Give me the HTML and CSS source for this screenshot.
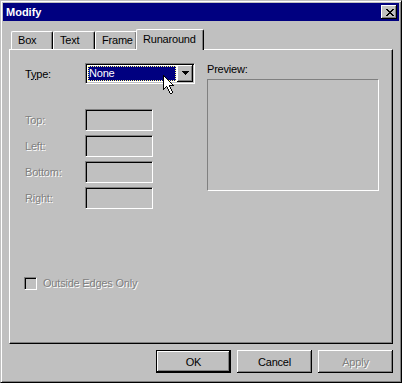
FILE: index.html
```html
<!DOCTYPE html>
<html>
<head>
<meta charset="utf-8">
<title>Modify</title>
<link rel="stylesheet" href="styles.css">
</head>
<body>
<div class="window">
  <div class="titlebar">
    <span class="title">Modify</span>
    <button class="close" aria-label="Close">
      <svg width="8" height="7" viewBox="0 0 8 7" shape-rendering="crispEdges"><path fill="#000" d="M0 0h2v1H0z M6 0h2v1H6z M1 1h2v1H1z M5 1h2v1H5z M2 2h4v1H2z M3 3h2v1H3z M2 4h4v1H2z M1 5h2v1H1z M5 5h2v1H5z M0 6h2v1H0z M6 6h2v1H6z"/></svg>
    </button>
  </div>
  <div class="dialog">
    <div class="tabs">
      <div class="tab">Box</div>
      <div class="tab">Text</div>
      <div class="tab">Frame</div>
      <div class="tab active">Runaround</div>
    </div>
    <div class="panel">
      <div class="cols">
        <div class="col-left">
          <div class="type-row">
            <span class="lbl">T<u>y</u>pe:</span>
            <div class="combo">
              <div class="combo-value"><span class="sel">None</span></div>
              <div class="combo-btn">
                <svg width="7" height="4" viewBox="0 0 7 4" shape-rendering="crispEdges"><path fill="#000" d="M0 0h7v1H0z M1 1h5v1H1z M2 2h3v1H2z M3 3h1v1H3z"/></svg>
              </div>
            </div>
          </div>
          <div class="fields">
            <div class="field-row"><span class="lbl disabled">Top:</span><div class="field"></div></div>
            <div class="field-row"><span class="lbl disabled">Left:</span><div class="field"></div></div>
            <div class="field-row"><span class="lbl disabled">Bottom:</span><div class="field"></div></div>
            <div class="field-row"><span class="lbl disabled">Right:</span><div class="field"></div></div>
          </div>
        </div>
        <div class="col-right">
          <div class="preview-label">Preview:</div>
          <div class="preview-box"></div>
        </div>
      </div>
      <div class="check-row">
        <span class="checkbox"></span>
        <span class="check-label disabled">Outside Edges Only</span>
      </div>
    </div>
    <div class="buttons">
      <button class="btn default">OK</button>
      <button class="btn">Cancel</button>
      <button class="btn" disabled>Apply</button>
    </div>
  </div>
  <svg class="cursor" width="12" height="19" viewBox="0 0 12 19" shape-rendering="crispEdges">
    <path fill="#fff" d="M1 2h1v1H1z M1 3h2v1H1z M1 4h3v1H1z M1 5h4v1H1z M1 6h5v1H1z M1 7h6v1H1z M1 8h7v1H1z M1 9h8v1H1z M1 10h5v1H1z M1 11h2v1H1z M4 11h2v1H4z M1 12h1v1H1z M5 12h2v1H5z M5 13h2v1H5z M6 14h2v1H6z M6 15h2v1H6z M7 16h2v1H7z M7 17h2v1H7z"/>
    <path fill="#000" d="M0 0h1v1H0z M0 1h2v1H0z M0 2h1v1H0z M2 2h1v1H2z M0 3h1v1H0z M3 3h1v1H3z M0 4h1v1H0z M4 4h1v1H4z M0 5h1v1H0z M5 5h1v1H5z M0 6h1v1H0z M6 6h1v1H6z M0 7h1v1H0z M7 7h1v1H7z M0 8h1v1H0z M8 8h1v1H8z M0 9h1v1H0z M9 9h1v1H9z M0 10h1v1H0z M6 10h5v1H6z M0 11h1v1H0z M3 11h1v1H3z M6 11h1v1H6z M0 12h1v1H0z M2 12h1v1H2z M4 12h1v1H4z M7 12h1v1H7z M0 13h2v1H0z M4 13h1v1H4z M7 13h1v1H7z M0 14h1v1H0z M5 14h1v1H5z M8 14h1v1H8z M5 15h1v1H5z M8 15h1v1H8z M6 16h1v1H6z M9 16h1v1H9z M6 17h1v1H6z M9 17h1v1H9z M7 18h2v1H7z"/>
  </svg>
</div>
</body>
</html>
```

FILE: styles.css
```css
html, body {
  margin: 0;
  padding: 0;
}

body {
  font-family: "Liberation Sans", Arial, sans-serif;
  font-size: 11px;
  letter-spacing: -0.2px;
  color: #000;
  background: #c0c0c0;
}

.window {
  position: relative;
  width: 402px;
  height: 383px;
  box-sizing: border-box;
  border: 1px solid;
  border-color: #c0c0c0 #000 #000 #c0c0c0;
  box-shadow: inset 1px 1px #fff, inset -1px -1px #808080;
  padding: 2px;
  background: #c0c0c0;
  display: flex;
  flex-direction: column;
}

/* title bar */
.titlebar {
  height: 18px;
  flex: none;
  background: #000080;
  color: #fff;
  display: flex;
  align-items: center;
  justify-content: space-between;
  padding: 0 2px 0 3px;
}

.title {
  font-weight: bold;
  line-height: 18px;
  letter-spacing: 0;
}

.close {
  width: 16px;
  height: 14px;
  box-sizing: border-box;
  padding: 0 0 0 1px;
  border: 0;
  background: #c0c0c0;
  box-shadow: inset -1px -1px #000, inset 1px 1px #fff, inset -2px -2px #808080;
  display: flex;
  align-items: center;
  justify-content: center;
}

.close svg {
  display: block;
}

/* dialog body */
.dialog {
  flex: 1;
  padding: 8px 6px 7px;
  display: flex;
  flex-direction: column;
}

.tabs {
  display: flex;
  align-items: flex-end;
  height: 20px;
  padding-left: 2px;
}

.tab {
  width: 42px;
  height: 18px;
  box-sizing: border-box;
  padding-left: 6px;
  line-height: 17px;
  white-space: nowrap;
  border-left: 1px solid #fff;
  border-top: 1px solid #fff;
  border-right: 1px solid #000;
  border-top-left-radius: 2px;
  border-top-right-radius: 2px;
  box-shadow: inset -1px 0 #808080;
  background: #c0c0c0;
}

.tab.active {
  position: relative;
  z-index: 1;
  width: 68px;
  height: 21px;
  margin-left: -1px;
  margin-bottom: -1px;
  padding-top: 1px;
}

.panel {
  height: 295px;
  box-sizing: border-box;
  border-left: 1px solid #fff;
  border-top: 1px solid #fff;
  border-right: 1px solid #000;
  border-bottom: 1px solid #000;
  box-shadow: inset -1px -1px #808080;
  padding: 13px 0 0 15px;
}

.cols {
  display: flex;
  gap: 12px;
}

.col-left {
  width: 170px;
}

.type-row {
  display: flex;
  align-items: center;
  height: 21px;
}

.lbl {
  width: 60px;
  flex: none;
}

.combo {
  width: 110px;
  height: 21px;
  box-sizing: border-box;
  border: 1px solid;
  border-color: #808080 #fff #fff #808080;
  box-shadow: inset 1px 1px #000, inset -1px -1px #c0c0c0;
  padding: 1px;
  background: #fff;
  display: flex;
}

.combo-value {
  flex: 1;
  padding: 1px;
}

.sel {
  display: block;
  height: 15px;
  box-sizing: border-box;
  border: 1px dotted #ffff80;
  background: #000080;
  color: #fff;
  line-height: 13px;
}

.combo-btn {
  width: 16px;
  height: 17px;
  box-sizing: border-box;
  background: #c0c0c0;
  box-shadow: inset -1px -1px #000, inset 1px 1px #fff, inset -2px -2px #808080;
  display: flex;
  align-items: center;
  justify-content: center;
  padding-bottom: 1px;
}

.combo-btn svg {
  display: block;
}

.fields {
  margin-top: 25px;
  display: flex;
  flex-direction: column;
  gap: 4px;
}

.field-row {
  display: flex;
  align-items: center;
}

.field {
  width: 68px;
  height: 22px;
  box-sizing: border-box;
  border: 1px solid;
  border-color: #808080 #fff #fff #808080;
  box-shadow: inset 1px 1px #000, inset -1px -1px #c0c0c0;
  background: #c0c0c0;
}

.preview-label {
  line-height: 13px;
  margin-bottom: 3px;
}

.preview-box {
  width: 172px;
  height: 112px;
  box-sizing: border-box;
  border: 1px solid;
  border-color: #808080 #fff #fff #808080;
}

.check-row {
  display: flex;
  align-items: center;
  gap: 6px;
  height: 13px;
  margin: 68px 0 0 -1px;
}

.checkbox {
  width: 13px;
  height: 13px;
  box-sizing: border-box;
  border: 1px solid;
  border-color: #808080 #fff #fff #808080;
  box-shadow: inset 1px 1px #000, inset -1px -1px #c0c0c0;
  background: #c0c0c0;
}

.check-label {
  line-height: 13px;
}

.disabled {
  color: #808080;
  text-shadow: 1px 1px 0 #fff;
}

/* buttons */
.buttons {
  display: flex;
  justify-content: flex-end;
  gap: 6px;
  margin-top: 6px;
}

.btn {
  width: 75px;
  height: 23px;
  box-sizing: border-box;
  padding: 0;
  border: 0;
  font: inherit;
  letter-spacing: inherit;
  color: #000;
  background: #c0c0c0;
  box-shadow: inset -1px -1px #000, inset 1px 1px #fff, inset -2px -2px #808080;
}

.btn.default {
  border: 1px solid #000;
}

.btn:disabled {
  color: #808080;
  text-shadow: 1px 1px 0 #fff;
}

.cursor {
  position: absolute;
  left: 162px;
  top: 74px;
}
```
